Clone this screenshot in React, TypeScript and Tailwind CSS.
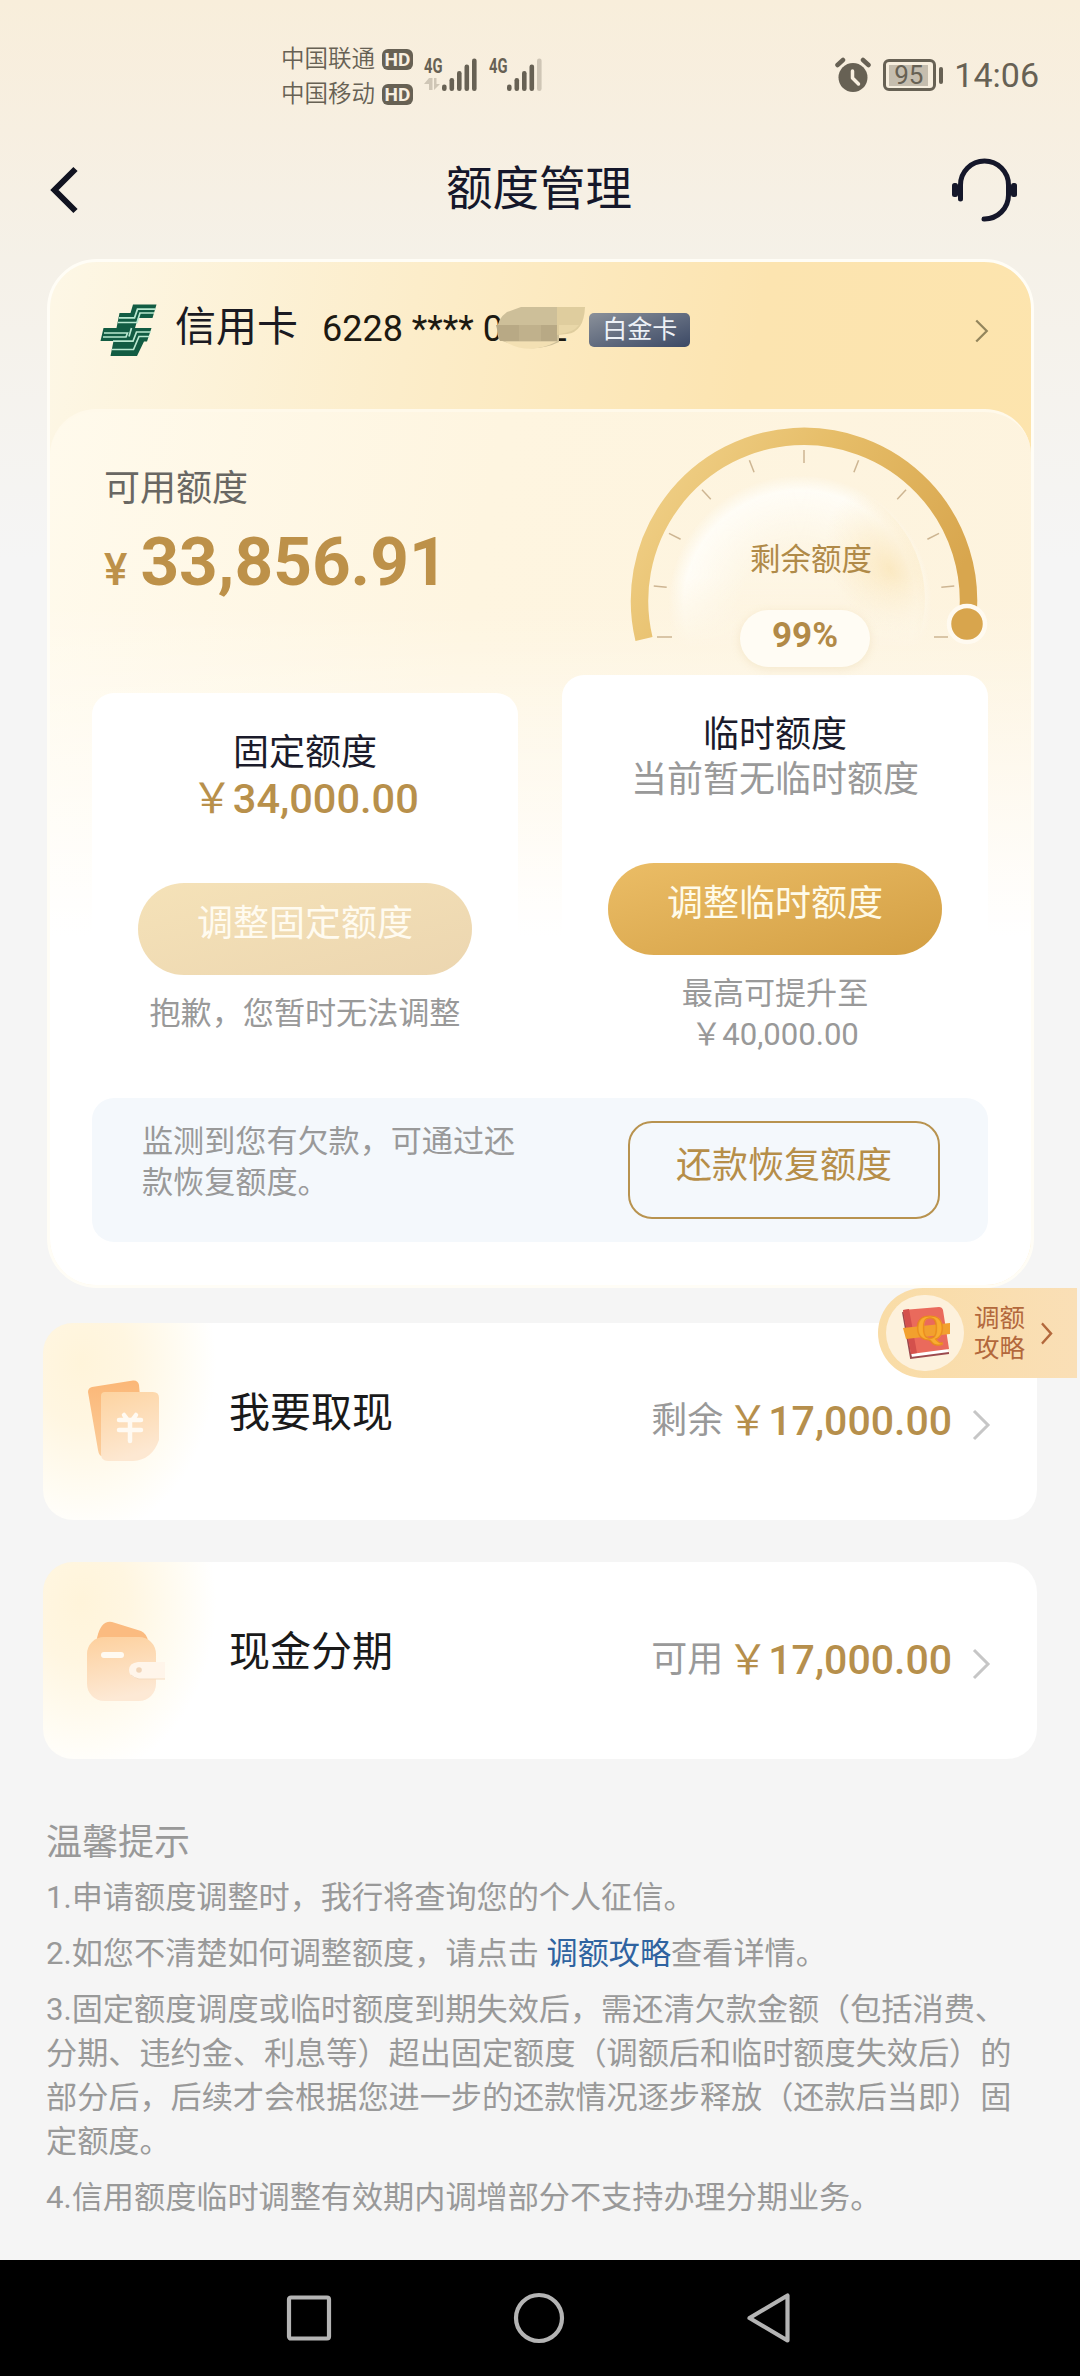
import { ReactNode } from 'react'

const PAGE_FONT = 'font-[Roboto,"Noto_Sans_CJK_SC",sans-serif]'

const TICKS = [90, 68.8, 47.5, 26.6, 5.7]

function SignalBars({ dim }: { dim?: boolean }) {
  return (
    <svg width="54" height="36" viewBox="0 0 54 36" className="overflow-visible">
      <text x="0" y="15.5" fontSize="20.5" fontWeight="700" fontFamily="Roboto" textLength="18.5" lengthAdjust="spacingAndGlyphs" fill="#676154">4G</text>
      {!dim && (
        <g fill="#cfc6b6">
          <path d="M5 21 V33 H8.5 V21 L5 21 L0 27 H5 Z" />
          <path d="M10 21 V33 L16 27 H12.5 V21 Z" />
        </g>
      )}
      {[27.5, 21, 14, 7.5, 1.5].map((y, i) => (
        <rect key={y} x={18 + i * 7.5} y={y} width="4.6" height={34 - y} rx="2.2" fill={dim && i === 4 ? '#cfc6b6' : '#676154'} />
      ))}
    </svg>
  )
}

function Hd() {
  return (
    <span className="flex h-[21px] w-[31px] items-center justify-center rounded-[6px] bg-[#676154] text-[19px] leading-[21px] font-bold text-[#f8efe0]">
      HD
    </span>
  )
}

function StatusBar() {
  return (
    <div className="flex h-[130px] items-start pt-[42px] pr-[41px] pl-[281px] text-[#676154]">
      <div className="flex flex-col text-[23.5px] leading-[35px]">
        <div className="flex items-center gap-[7px]"><span className="font-[350]">中国联通</span><Hd /></div>
        <div className="flex items-center gap-[7px]"><span className="font-[350]">中国移动</span><Hd /></div>
      </div>
      <div className="mt-[15px] ml-[11px] flex gap-[11px]">
        <SignalBars />
        <SignalBars dim />
      </div>
      <div className="mt-[15px] ml-auto flex items-center">
        <svg width="36" height="36" viewBox="0 0 36 36" className="mr-[12px]">
          <circle cx="18" cy="20.500" r="14.500" fill="#676154" />
          <path d="M2.500 8 L8 3 M33.500 8 L28 3" stroke="#676154" strokeWidth="4.500" strokeLinecap="round" />
          <path d="M17.500 14 V21 L23.500 27" fill="none" stroke="#f8efe0" strokeWidth="3.500" strokeLinecap="round" strokeLinejoin="round" />
        </svg>
        <div className="flex h-[32px] w-[53px] items-center rounded-[6px] border-[3px] border-[#676154] pl-[3px]">
          <div className="flex h-[21px] w-[39px] items-center justify-center bg-[#c5bdae] text-[26px] leading-[21px]">95</div>
        </div>
        <div className="ml-[3px] h-[17px] w-[4px] rounded-full bg-[#676154]" />
        <span className="ml-[11px] text-[34px] leading-[36px]">14:06</span>
      </div>
    </div>
  )
}

function TitleBar() {
  return (
    <div className="flex h-[129px] items-start pr-[62px] pl-[48px] text-[#15172a]">
      <svg width="34" height="50" viewBox="0 0 34 50" className="mt-[35px] mr-[46px]">
        <path d="M27.500 4 L6.500 25 L27.500 46" fill="none" stroke="#111320" strokeWidth="6" />
      </svg>
      <h1 className="mt-[29px] flex-1 text-center text-[46.5px] leading-[60px]">额度管理</h1>
      <svg width="68" height="66" viewBox="0 0 68 66" className="mt-[27px]">
        <path d="M10.500 42 V28 A24 24 0 0 1 58.500 28 V38 A24 24 0 0 1 34 62" fill="none" stroke="#15172a" strokeWidth="5" strokeLinecap="round" />
        <rect x="2" y="26" width="6" height="14" rx="2.500" fill="#15172a" />
        <rect x="61" y="26" width="6" height="14" rx="2.500" fill="#15172a" />
      </svg>
    </div>
  )
}

function BankLogo() {
  return (
    <svg width="57" height="53" viewBox="0 0 57 53">
      <g fill="#125c43">
        <path d="M33 0.500 H56.500 L52.500 14 H38 L35 24 H16.500 L19.500 9 H30.500 Z" />
        <path d="M3.500 24 H51.500 L47 37.500 H44 L37 52 H10.500 L13.500 37 H0.500 Z" />
      </g>
      <g fill="none" stroke="#b9e8d0" strokeWidth="1.700">
        <path d="M55.500 5.200 H37.500 L34.500 13.800 H19" />
        <path d="M54 9 H40 L37 18.500 H18" />
        <path d="M4 29 H27.500 L26 33 H3" />
        <path d="M51 28 H36.500 L33 37.200 H13" />
        <path d="M49.500 32.500 H39 L33.500 45.500 H12" />
        <path d="M31.500 24 L29 32.500" />
      </g>
    </svg>
  )
}

function Chevron({ color, width = 20, height = 32, stroke = 3 }: { color: string; width?: number; height?: number; stroke?: number }) {
  return (
    <svg width={width} height={height} viewBox="0 0 20 32" preserveAspectRatio="none">
      <path d="M3 2 L17 16 L3 30" fill="none" stroke={color} strokeWidth={stroke} />
    </svg>
  )
}

function CardHeader() {
  return (
    <div className="flex h-[147px] items-start pr-[42px] pl-[50px]">
      <div className="mt-[42px]"><BankLogo /></div>
      <span className="mt-[37px] ml-[18px] text-[41px] leading-[56px] text-[#1b1a22]">信用卡</span>
      <div className="relative mt-[42px] ml-[24px] text-[36px] leading-[50px] text-[#1d1a12]">
        6228 **** 0
        <span className="inline-block w-[44px]" />2
        <svg width="92" height="46" viewBox="0 0 92 46" className="absolute top-0 left-[173px]">
          <path d="M26 3 H64 V38 Q50 45 34 44 Q18 41 4 36 Q-2 18 12 8 Z" fill="#cdbf99" />
          <path d="M1 21 H62 V37 H5 Z" fill="#b8a985" />
          <path d="M24 21 H46 V37 H24 Z" fill="#c0b18c" />
          <path d="M62 3 H90 Q89 28 72 30 L62 31 Z" fill="#dfcd9e" />
          <path d="M64 21 H84 Q78 29 64 30 Z" fill="#e9d7a8" />
          <path d="M10 37.500 H62 Q34 52 10 37.500 Z" fill="#f3e0b3" />
        </svg>
      </div>
      <span className="mt-[51px] ml-[22px] h-[34px] w-[101px] rounded-[5px] bg-linear-to-br from-[#8b919a] to-[#3c4965] text-center text-[25px] leading-[33px] text-[#edf1f7]">白金卡</span>
      <div className="mt-[57px] ml-auto"><Chevron color="#93855c" width={15} height={24} /></div>
    </div>
  )
}

function Gauge() {
  const cx = 184
  const cy = 182
  return (
    <div className="relative h-[256px] w-[380px]">
      <svg width="380" height="256" viewBox="0 0 380 256">
        <defs>
          <linearGradient id="arc" x1="0" y1="0.200" x2="1" y2="0.600">
            <stop offset="0" stopColor="#f0d088" />
            <stop offset="0.450" stopColor="#e6bd68" />
            <stop offset="1" stopColor="#d8a64e" />
          </linearGradient>
          <linearGradient id="domeFade" x1="0" y1="0" x2="0" y2="1">
            <stop offset="0.600" stopColor="#fff" />
            <stop offset="1" stopColor="#fff" stopOpacity="0" />
          </linearGradient>
          <radialGradient id="domeRing">
            <stop offset="0.450" stopColor="#fffefa" stopOpacity="0.200" />
            <stop offset="0.880" stopColor="#fffefa" stopOpacity="0.850" />
            <stop offset="1" stopColor="#fffefa" stopOpacity="0" />
          </radialGradient>
          <radialGradient id="domeGlow">
            <stop offset="0" stopColor="#f9e1ae" stopOpacity="0.700" />
            <stop offset="0.500" stopColor="#fae5b9" stopOpacity="0.400" />
            <stop offset="1" stopColor="#fbe9c4" stopOpacity="0" />
          </radialGradient>
          <mask id="domeMask">
            <rect x="40" y="50" width="290" height="180" fill="url(#domeFade)" />
          </mask>
          <clipPath id="domeClip">
            <circle cx="184" cy="180" r="121" />
          </clipPath>
        </defs>
        <g mask="url(#domeMask)">
          <ellipse cx="180" cy="186" rx="132" ry="130" fill="url(#domeRing)" />
          <g clipPath="url(#domeClip)">
            <ellipse cx="270" cy="150" rx="56" ry="84" transform="rotate(-32 270 150)" fill="url(#domeGlow)" />
          </g>
        </g>
        <path d="M24 220 A164.500 164.500 0 1 1 347.500 200" fill="none" stroke="url(#arc)" strokeWidth="17.500" />
        <g stroke="#cdb592" strokeWidth="1.500">
          {TICKS.flatMap((a) => (a === 90 ? [a] : [a, 180 - a])).map((a) => {
            const c = Math.cos((a * Math.PI) / 180)
            const s = Math.sin((a * Math.PI) / 180)
            return <path key={a} d={`M${cx + 151 * c} ${cy - 151 * s} L${cx + 138 * c} ${cy - 138 * s}`} />
          })}
          <path d="M37 218 H52 M314 218 H328" />
        </g>
        <circle cx="347" cy="205" r="18" fill="#d8a54d" stroke="#fffaf0" strokeWidth="4.500" />
      </svg>
      <div className="absolute top-[119px] left-[130px] text-[30.5px] leading-[44px] text-[#b08a48]">剩余额度</div>
      <div className="absolute top-[191px] left-[120px] h-[57px] w-[130px] rounded-full bg-[#fffcf4] text-center text-[35px] leading-[51px] font-bold text-[#b28a47] shadow-[0_2px_8px_rgba(220,190,130,0.25)]">
        99%
      </div>
    </div>
  )
}

function LimitCard({ className, title, value, action, actionClass, children }: {
  className: string
  title: string
  value: ReactNode
  action: string
  actionClass: string
  children: ReactNode
}) {
  return (
    <div className={`flex w-[426px] flex-col items-center rounded-[22px] bg-white pt-[37px] ${className}`}>
      <div className="text-[36px] leading-[46px] text-[#1b1b2b]">{title}</div>
      {value}
      <button className={`mt-[61px] h-[92px] w-[334px] rounded-full pb-[10px] text-[36px] leading-[82px] ${actionClass}`}>{action}</button>
      <div className="mt-[18px] text-center text-[31.100px] leading-[41px] text-[#999]">{children}</div>
    </div>
  )
}

function QuotaCard() {
  return (
    <section className="mr-[46px] ml-[47px] rounded-[50px] border-[3px] border-[#fffdf6] bg-[linear-gradient(100deg,#fdf7e6_0%,#fcedca_32%,#fce4b0_62%,#fde4ac_100%)]">
      <CardHeader />
      <div className="h-[876px] rounded-[46px] border-t-[3px] border-[#fff9ea] bg-[linear-gradient(180deg,transparent_0%,transparent_22%,#fff_60%),linear-gradient(100deg,#fffaec_0%,#fef5e0_40%,#fdf3de_100%)]">
        <div className="flex h-[263px] justify-between">
          <div className="pt-[52px] pl-[54px]">
            <div className="text-[36px] leading-[50px] text-[#696763]">可用额度</div>
            <div className="mt-[8px] flex items-baseline text-[#bd9149]">
              <span className="text-[44px] leading-[80px] font-medium">¥</span>
              <span className="ml-[13px] text-[67.500px] leading-[80px] font-bold">33,856.91</span>
            </div>
          </div>
          <div className="mr-[31px] pt-[7px]"><Gauge /></div>
        </div>
        <div className="flex h-[423px] items-start justify-between pr-[43px] pl-[42px]">
          <LimitCard
            className="mt-[18px]"
            title="固定额度"
            value={<div className="text-[41.500px] leading-[46px] font-medium text-[#b8904b]"><span className="font-normal">￥</span>34,000.00</div>}
            action="调整固定额度"
            actionClass="bg-linear-to-br from-[#f5e2b8] to-[#ecd6b0] text-[#fffbf0]"
          >
            抱歉，您暂时无法调整
          </LimitCard>
          <LimitCard
            className=""
            title="临时额度"
            value={<div className="text-[36px] leading-[44px] text-[#999]">当前暂无临时额度</div>}
            action="调整临时额度"
            actionClass="bg-linear-to-br from-[#ebbd66] to-[#d39f43] text-[#fffbe9]"
          >
            最高可提升至<br />￥40,000.00
          </LimitCard>
        </div>
        <div className="mr-[43px] ml-[42px] flex h-[144px] items-start justify-between rounded-[22px] bg-[#f4f8fc] pt-[23px] pr-[48px] pl-[50px]">
          <p className="w-[380px] text-[31.100px] leading-[41px] text-[#999]">监测到您有欠款，可通过还款恢复额度。</p>
          <button className="h-[98px] w-[312px] rounded-[24px] border-2 border-[#b8934f] pb-[8px] text-[36px] leading-[84px] text-[#b68e49]">还款恢复额度</button>
        </div>
      </div>
    </section>
  )
}

function CashIcon() {
  return (
    <svg width="72" height="84" viewBox="0 0 72 84">
      <defs>
        <linearGradient id="cashBack" x1="0" y1="0" x2="0" y2="1">
          <stop offset="0" stopColor="#fbb777" />
          <stop offset="1" stopColor="#fbcd9b" />
        </linearGradient>
        <linearGradient id="cashFront" x1="0" y1="0" x2="0.300" y2="1">
          <stop offset="0" stopColor="#fdd3a0" />
          <stop offset="1" stopColor="#fde8d2" />
        </linearGradient>
      </defs>
      <path d="M4 7 L45 0.500 Q50 0 51 5 L56 60 L14 76 Q11 76 10 70 L0 12 Q0 8 4 7 Z" fill="url(#cashBack)" />
      <path d="M17 12 H65 Q71 12 71 18 V60 Q64 80 45 81 H20 Q13 81 13 74 V16 Q13 12 17 12 Z" fill="url(#cashFront)" />
      <path d="M36 35 L39 39 M48 35 L45 39 M31 40 H53 M31 50 H53 M42 40 V61" stroke="#fffaf2" strokeWidth="4.500" strokeLinecap="round" />
    </svg>
  )
}

function WalletIcon() {
  return (
    <svg width="82" height="82" viewBox="0 0 82 82">
      <defs>
        <linearGradient id="walletBody" x1="0" y1="0" x2="0.200" y2="1">
          <stop offset="0" stopColor="#fdd09d" />
          <stop offset="1" stopColor="#fde9d5" />
        </linearGradient>
      </defs>
      <path d="M11 17 Q15 -1 26 1 L55 10 Q61 13 62 20 V28 H10 Z" fill="#fbbb80" />
      <rect x="1" y="16" width="69" height="64" rx="17" fill="url(#walletBody)" />
      <rect x="15" y="31" width="23" height="6" rx="3" fill="#fffaf2" />
      <path d="M52 41 H79 V58 H52 Q43 56 43 49 Q43 42 52 41 Z" fill="#fff5ea" />
      <path d="M45 54 Q48 57 53 58 H79" fill="none" stroke="#f5dcc2" strokeWidth="1" />
      <circle cx="53" cy="49" r="2.800" fill="#f0d4b8" />
    </svg>
  )
}

function EntryRow({ icon, iconClass, title, label }: { icon: ReactNode; iconClass: string; title: string; label: string }) {
  return (
    <div className="mx-[43px] flex h-[197px] items-start rounded-[30px] bg-white bg-[radial-gradient(ellipse_135px_175px_at_38px_40px,#fff4da_0%,#fff6e1_35%,#fffcf3_75%,#fff_100%)] pr-[46px]">
      <div className={`w-[186px] ${iconClass}`}>{icon}</div>
      <div className="mt-[60px] text-[41px] leading-[60px] text-[#1a1a1a]">{title}</div>
      <div className="mt-[74px] ml-auto flex items-center text-[#b68f4c]">
        <span className="mr-[4px] text-[36px] leading-[48px] text-[#999]">{label}</span>
        <span className="text-[41px] leading-[48px] font-medium"><span className="font-normal">￥</span>17,000.00</span>
        <div className="mt-[7px] ml-[19px]"><Chevron color="#c6c6c6" /></div>
      </div>
    </div>
  )
}

function GuideTag() {
  return (
    <div className="absolute top-[1288px] right-[3px] flex h-[90px] w-[199px] items-center rounded-l-full bg-linear-to-r from-[#f9dca6] to-[#fadfb6] pl-[8px]">
      <div className="flex h-[76px] w-[78px] items-center justify-center rounded-full bg-[#fdf1dc]">
        <svg width="52" height="54" viewBox="0 0 52 54">
          <path d="M5 5 L12 52 L50 47 L48 43 L10 45 Z" fill="#fff" />
          <path d="M4 6 L12 52 L50 47" fill="none" stroke="#9b4a4e" strokeWidth="2" />
          <path d="M4 4 L40 1 Q43 1 44 4 L50 43 L12 48 Z" fill="#ea6a5c" />
          <path d="M4 4 L10 3 L18 47 L12 48 Z" fill="#d4504c" />
          <path d="M4 22 L51 17 V28 L7 33 Z" fill="#f2a02e" />
          <text x="17" y="34" fontSize="35" fontWeight="700" fontFamily="Liberation Serif" textLength="28" lengthAdjust="spacingAndGlyphs" fill="#f9ac30" stroke="#e98c1c" strokeWidth="1.200">Q</text>
        </svg>
      </div>
      <div className="ml-[10px] text-[25.500px] leading-[30px] text-[#b3683c]">调额<br />攻略</div>
      <div className="ml-[15px]"><Chevron color="#b3683c" width={13} height={23} stroke={3.5} /></div>
    </div>
  )
}

function Tips() {
  return (
    <section className="mt-[60px] h-[441px] px-[46px] text-[#999]">
      <h2 className="text-[36px] leading-[48px]">温馨提示</h2>
      <div className="mt-[9px] flex flex-col gap-[12px] text-[31.150px] leading-[44px]">
        <p>1.申请额度调整时，我行将查询您的个人征信。</p>
        <p>2.如您不清楚如何调整额度，请点击 <a className="text-[#2f63a0]">调额攻略</a>查看详情。</p>
        <p>
          3.固定额度调度或临时额度到期失效后，需还清欠款金额（包括消费、<br />
          分期、违约金、利息等）超出固定额度（调额后和临时额度失效后）的<br />
          部分后，后续才会根据您进一步的还款情况逐步释放（还款后当即）固<br />
          定额度。
        </p>
        <p>4.信用额度临时调整有效期内调增部分不支持办理分期业务。</p>
      </div>
    </section>
  )
}

function NavBar() {
  return (
    <nav className="flex h-[116px] items-center justify-between bg-black pr-[288px] pl-[286px]">
      <svg width="46" height="48" viewBox="0 0 46 48"><rect x="3" y="3.500" width="40" height="41" rx="2" fill="none" stroke="#b4b4b4" strokeWidth="4.200" /></svg>
      <svg width="52" height="52" viewBox="0 0 52 52"><circle cx="26" cy="26" r="23" fill="none" stroke="#b4b4b4" strokeWidth="4.200" /></svg>
      <svg width="46" height="52" viewBox="0 0 46 52"><path d="M3.500 26 L41.500 3.500 V48.500 Z" fill="none" stroke="#b4b4b4" strokeWidth="4.200" strokeLinejoin="round" /></svg>
    </nav>
  )
}

export default function App() {
  return (
    <div lang="zh-CN" className={`relative h-[2376px] w-[1080px] overflow-hidden bg-[#f5f5f5] bg-[linear-gradient(180deg,#f8eedb_0px,#f7efe1_130px,#f5f1e8_260px,#f5f5f5_560px)] whitespace-nowrap ${PAGE_FONT} [&_p]:whitespace-normal`}>
      <StatusBar />
      <TitleBar />
      <QuotaCard />
      <div className="mt-[35px] flex flex-col gap-[42px]">
        <EntryRow icon={<CashIcon />} iconClass="pt-[57px] pl-[45px]" title="我要取现" label="剩余" />
        <EntryRow icon={<WalletIcon />} iconClass="pt-[59px] pl-[43px]" title="现金分期" label="可用" />
      </div>
      <Tips />
      <NavBar />
      <GuideTag />
    </div>
  )
}
